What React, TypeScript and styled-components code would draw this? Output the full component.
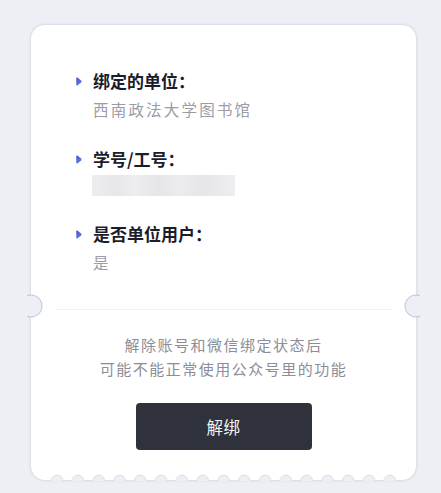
import React from "react";
import styled, { createGlobalStyle } from "styled-components";

const PAGE_BG = "#eeeff4";
const EDGE = "rgba(175, 180, 210, 0.75)";

const GlobalStyle = createGlobalStyle`
  html, body {
    margin: 0;
    padding: 0;
    background: ${PAGE_BG};
    font-family: "Noto Sans CJK SC", "Noto Sans", sans-serif;
  }
`;

const Page = styled.div`
  min-height: 493px;
  box-sizing: border-box;
  padding: 25px 25px 13px 31px;
  display: flex;
  flex-direction: column;
`;

const Card = styled.div`
  position: relative;
  background: #ffffff;
  border-radius: 14px;
  box-shadow: 0 0 3px ${EDGE};
  display: flex;
  flex-direction: column;

  &::after {
    content: "";
    position: absolute;
    left: 15px;
    right: 15px;
    bottom: -1px;
    height: 7px;
    background-image: radial-gradient(
      circle at 50% 100%,
      ${PAGE_BG} 5px,
      #d9dbe6 5.7px,
      rgba(255, 255, 255, 0) 6.7px
    );
    background-size: 20.8px 7px;
    background-repeat: repeat-x;
    background-position: center bottom;
  }
`;

const InfoSection = styled.div`
  display: flex;
  flex-direction: column;
  gap: 26px;
  padding: 44px 24px 35px 45px;
`;

const Item = styled.div`
  display: flex;
  flex-direction: column;
  gap: 4px;
`;

const TitleRow = styled.div`
  display: flex;
  align-items: center;
  gap: 11px;
`;

const Title = styled.div`
  font-size: 17px;
  font-weight: 700;
  line-height: 24px;
  color: #1c1c2b;
`;

const Value = styled.div`
  padding-left: 17px;
  font-size: 15.5px;
  line-height: 24px;
  letter-spacing: 2.2px;
  color: #9c9ca6;
`;

const Masked = styled.div`
  margin-left: 16px;
  width: 143px;
  height: 21px;
  background: linear-gradient(
    90deg,
    #ededf0 0%,
    #e7e7eb 18%,
    #eeeef1 30%,
    #e5e5e9 46%,
    #ececef 60%,
    #e6e6ea 78%,
    #eeeef1 100%
  );
`;

const Divider = styled.div`
  position: relative;
  padding: 0 23px 0 24px;

  &::before,
  &::after {
    content: "";
    position: absolute;
    top: -16px;
    width: 16px;
    height: 26px;
  }
  &::before {
    left: -4px;
    background: radial-gradient(
      circle at 4px 50%,
      ${PAGE_BG} 10px,
      ${EDGE} 10.8px,
      rgba(255, 255, 255, 0) 12px
    );
  }
  &::after {
    right: -4px;
    background: radial-gradient(
      circle at calc(100% - 4px) 50%,
      ${PAGE_BG} 10px,
      ${EDGE} 10.8px,
      rgba(255, 255, 255, 0) 12px
    );
  }
`;

const Line = styled.div`
  height: 1px;
  background: #f1f1f4;
`;

const NoticeSection = styled.div`
  display: flex;
  flex-direction: column;
  align-items: center;
  padding: 23px 0 30px;
`;

const Notice = styled.p`
  margin: 0;
  font-size: 15px;
  line-height: 24px;
  letter-spacing: 1.5px;
  color: #8d8d97;
  text-align: center;
`;

const UnbindButton = styled.button`
  margin-top: 22px;
  width: 176px;
  height: 47px;
  border: none;
  border-radius: 4px;
  background: #30323b;
  color: #f4f4f6;
  font-family: inherit;
  font-size: 16.5px;
  letter-spacing: 0.5px;
  cursor: pointer;
`;

const Bullet = () => (
  <svg width="6" height="9" viewBox="0 0 6 9">
    <defs>
      <linearGradient id="bulletGrad" x1="0" y1="0" x2="1" y2="1">
        <stop offset="0" stopColor="#3a50d2" />
        <stop offset="1" stopColor="#7486e6" />
      </linearGradient>
    </defs>
    <path
      d="M0.3 1.3 Q0.3 0.2 1.4 0.6 L5.2 3.6 Q6 4.5 5.2 5.4 L1.4 8.4 Q0.3 8.8 0.3 7.7 Z"
      fill="url(#bulletGrad)"
    />
  </svg>
);

type InfoItemProps = {
  title: string;
  value?: string;
  masked?: boolean;
};

const InfoItem: React.FC<InfoItemProps> = ({ title, value, masked }) => (
  <Item>
    <TitleRow>
      <Bullet />
      <Title>{title}</Title>
    </TitleRow>
    {masked ? <Masked aria-label="已隐藏" /> : <Value>{value}</Value>}
  </Item>
);

export default function App() {
  return (
    <>
      <GlobalStyle />
      <Page>
        <Card>
          <InfoSection>
            <InfoItem title="绑定的单位：" value="西南政法大学图书馆" />
            <InfoItem title="学号/工号：" masked />
            <InfoItem title="是否单位用户：" value="是" />
          </InfoSection>
          <Divider>
            <Line />
          </Divider>
          <NoticeSection>
            <Notice>
              解除账号和微信绑定状态后
              <br />
              可能不能正常使用公众号里的功能
            </Notice>
            <UnbindButton>解绑</UnbindButton>
          </NoticeSection>
        </Card>
      </Page>
    </>
  );
}
